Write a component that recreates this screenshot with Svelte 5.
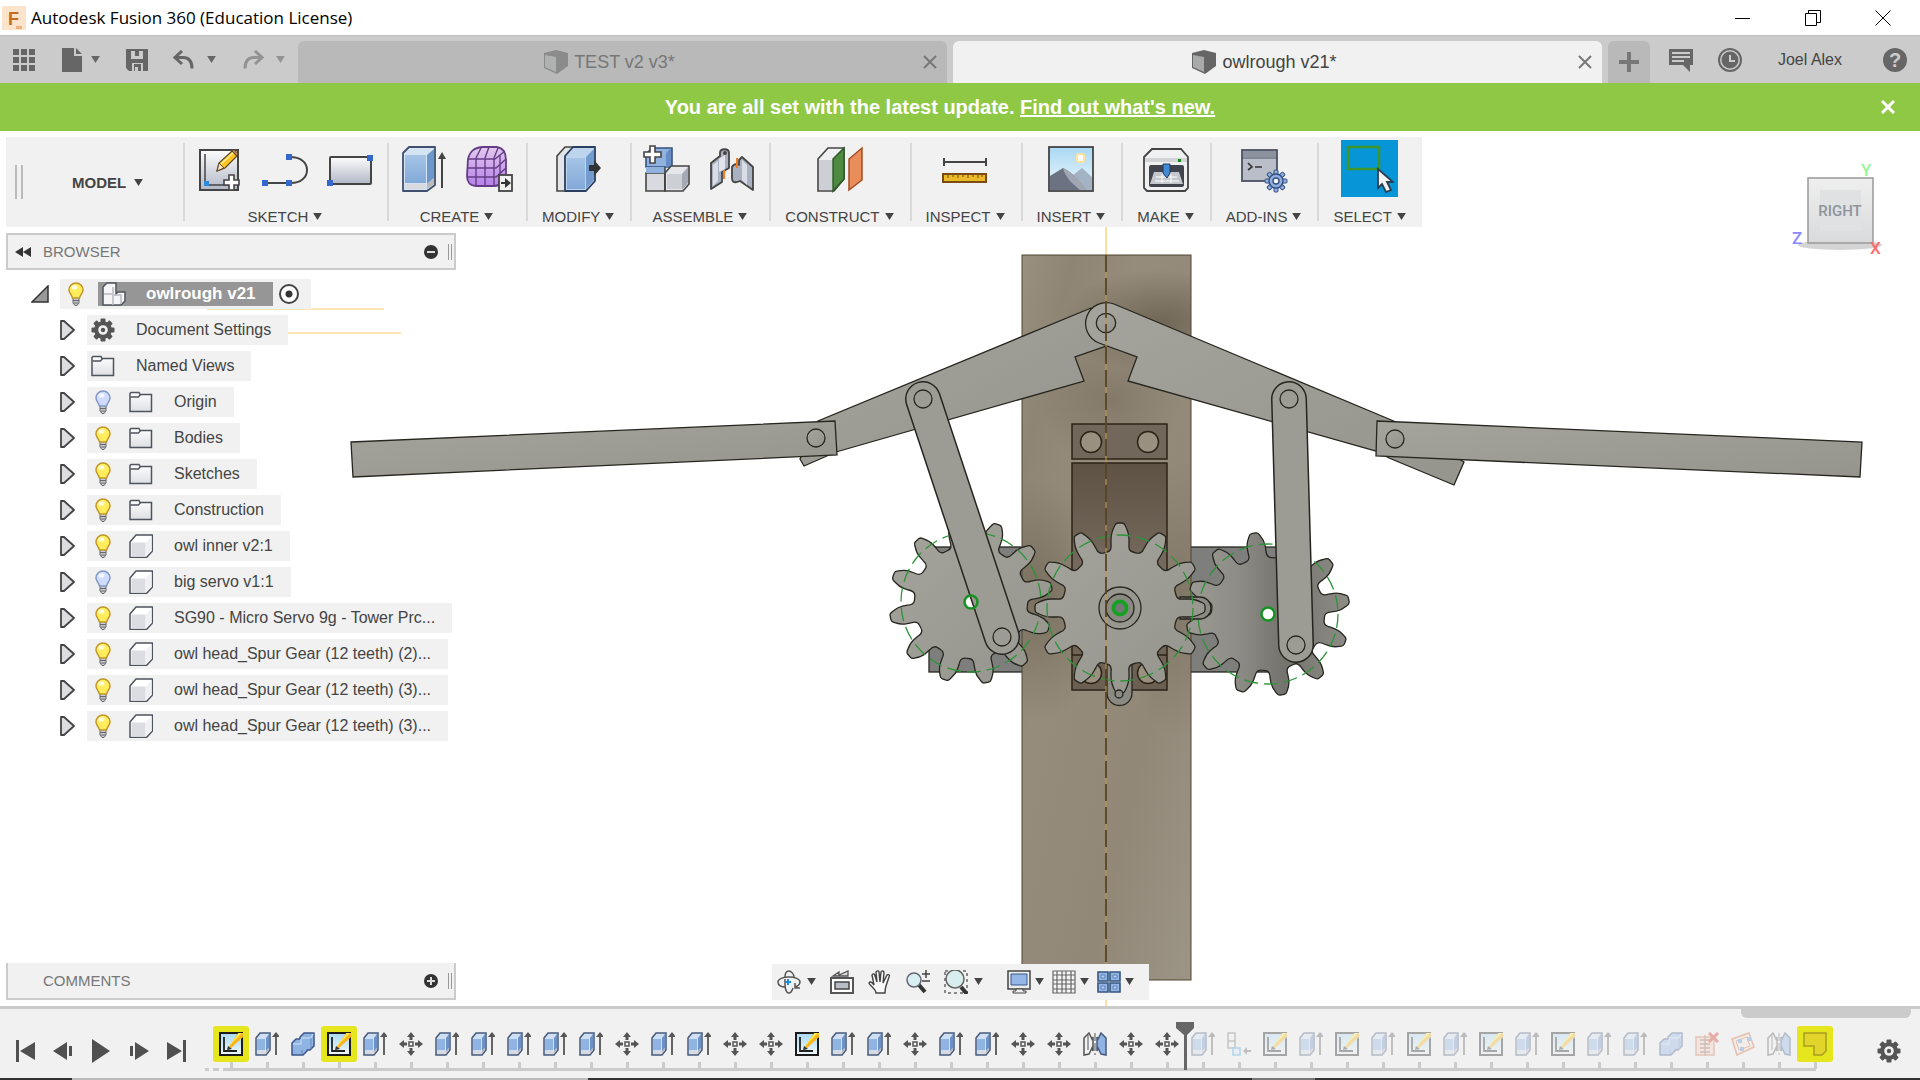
<script lang="ts">
  type Feature = 'sketch' | 'extrude' | 'combine' | 'move' | 'mirror' | 'component' | 'remove' | 'plane' | 'flange';

  const groups = [
    { label: 'SKETCH', icons: ['newSketch', 'line', 'rect'] },
    { label: 'CREATE', icons: ['box', 'form'] },
    { label: 'MODIFY', icons: ['pressPull'] },
    { label: 'ASSEMBLE', icons: ['newComponent', 'joint'] },
    { label: 'CONSTRUCT', icons: ['offsetPlane'] },
    { label: 'INSPECT', icons: ['measure'] },
    { label: 'INSERT', icons: ['image'] },
    { label: 'MAKE', icons: ['printer'] },
    { label: 'ADD-INS', icons: ['scripts'] },
    { label: 'SELECT', icons: ['select'] }
  ];

  let nodes = $state([
    { name: 'Document Settings', icon: 'gear', bulb: false, on: true },
    { name: 'Named Views', icon: 'folder', bulb: false, on: true },
    { name: 'Origin', icon: 'folder', bulb: true, on: false },
    { name: 'Bodies', icon: 'folder', bulb: true, on: true },
    { name: 'Sketches', icon: 'folder', bulb: true, on: true },
    { name: 'Construction', icon: 'folder', bulb: true, on: true },
    { name: 'owl inner v2:1', icon: 'part', bulb: true, on: true },
    { name: 'big servo v1:1', icon: 'part', bulb: true, on: false },
    { name: 'SG90 - Micro Servo 9g - Tower Prc...', icon: 'part', bulb: true, on: true },
    { name: 'owl head_Spur Gear (12 teeth) (2)...', icon: 'part', bulb: true, on: true },
    { name: 'owl head_Spur Gear (12 teeth) (3)...', icon: 'part', bulb: true, on: true },
    { name: 'owl head_Spur Gear (12 teeth) (3)...', icon: 'part', bulb: true, on: true }
  ]);

  const codes: Record<string, Feature> = {
    s: 'sketch', e: 'extrude', c: 'combine', m: 'move', r: 'mirror',
    n: 'component', x: 'remove', p: 'plane', f: 'flange'
  };
  // one letter per timeline feature
  const history = 'secsemeeeeemeemmseemeemmrmmenseseseseseecxprf'.split('').map((c) => codes[c]);
  const flagged = [0, 3, 44];
  const markerAt = 27;

  let bannerOpen = $state(true);
  let rootOn = $state(true);

  function gearPath(cx: number, cy: number, root: number, tip: number, turn: number) {
    let d = '';
    for (let i = 0; i < 12; i++) {
      const a = ((turn + i * 30) * Math.PI) / 180;
      const p = (x: number, r: number) =>
        `${(cx + x * Math.cos(a) + r * Math.sin(a)).toFixed(1)} ${(cy + x * Math.sin(a) - r * Math.cos(a)).toFixed(1)}`;
      d += `${i ? 'L' : 'M'}${p(-13, root - 1)} Q${p(-8, root)} ${p(-9, root + 7)} L${p(-9, root + 12)} `;
      d += `C${p(-9, root + 18)} ${p(-6, tip - 4)} ${p(-5, tip - 2)} Q${p(-4, tip)} ${p(-2, tip)} L${p(2, tip)} `;
      d += `Q${p(4, tip)} ${p(5, tip - 2)} C${p(6, tip - 4)} ${p(9, root + 18)} ${p(9, root + 12)} `;
      d += `L${p(9, root + 7)} Q${p(8, root)} ${p(13, root - 1)} `;
    }
    return d + 'Z';
  }

  const cogTeeth = [0, 45, 90, 135, 180, 225, 270, 315];
</script>

{#snippet caret()}
  <svg class="caret" viewBox="0 0 10 8" width="9" height="7" aria-hidden="true"><path d="M0 0h10L5 8z" fill="currentColor" /></svg>
{/snippet}

{#snippet cog(size: number)}
  <svg viewBox="0 0 24 24" width={size} height={size} aria-hidden="true">
    {#each cogTeeth as a}
      <rect x="9.500" y="0.500" width="5" height="6" rx="1" fill="#555" transform="rotate({a} 12 12)" />
    {/each}
    <circle cx="12" cy="12" r="6.800" fill="none" stroke="#555" stroke-width="4" />
    <circle cx="12" cy="12" r="2.200" fill="#555" />
  </svg>
{/snippet}

{#snippet cube(dim: boolean)}
  <svg viewBox="0 0 24 24" width="24" height="24" opacity={dim ? 0.55 : 1} aria-hidden="true">
    <path d="M0 3 12 0 24 3v13l-11 8L0 18z" fill="#666" />
    <path d="M1 5l11 2v15L1 17z" fill="#a9abab" />
  </svg>
{/snippet}

{#snippet bulb(on: boolean)}
  <svg viewBox="0 0 24 24" width="24" height="24" aria-hidden="true">
    <path d="M9 15h6v6l-2 2.500h-2L9 21z" fill="#c9ccd2" stroke="#666" />
    <path d="M12 1a7 7 0 0 0-7 7c0 3 2.500 4.500 3.500 8h7c1-3.500 3.500-5 3.500-8a7 7 0 0 0-7-7z" fill={on ? '#ffee5a' : '#cfdcff'} stroke={on ? '#c2952a' : '#8398c8'} stroke-width="1.500" />
    <ellipse cx="10.500" cy="5.500" rx="3" ry="2.200" fill="#fff" opacity=".8" />
    <path d="M9 18.500h6M10 21h4" stroke="#666" />
  </svg>
{/snippet}

{#snippet treeIcon(name: string)}
  {#if name === 'gear'}
    {@render cog(24)}
  {:else if name === 'folder'}
    <svg viewBox="0 0 24 24" width="24" height="24" aria-hidden="true">
      <path d="M1 21V3.500l1-1h8l1 2h11.500V21.500H1z" fill="url(#sheet)" stroke="#4e545e" stroke-width="1.500" />
      <path d="M1.500 7h8l2-2.500" fill="none" stroke="#4e545e" stroke-width="1.300" />
    </svg>
  {:else}
    <svg viewBox="0 0 24 24" width="24" height="24" aria-hidden="true">
      <path d="M1 8l6-7h16.500v16l-6 6.500H1z" fill="#fff" stroke="#4e545e" stroke-width="1.500" stroke-linejoin="round" />
      <path d="M2.500 8.500h14V22h-14z" fill="#dcdde2" />
      <path d="M17 8.500l5.500-6V17L17 22z" fill="#f0f0f4" />
    </svg>
  {/if}
{/snippet}

{#snippet tool(name: string)}
  <svg viewBox="0 0 48 48" width="48" height="48" aria-hidden="true">
    {#if name === 'newSketch'}
      <rect x="4" y="5" width="38" height="40" fill="url(#sheet2)" stroke="#444" stroke-width="2" />
      <path d="M9 9v31h24" fill="none" stroke="#444" stroke-width="1.500" />
      <rect x="8" y="36" width="5" height="5" fill="#2a8ae0" />
      <path d="M21 26l2-8L36 6l5 5-12 12z" fill="#ffc41f" stroke="#5b4520" stroke-width="1.200" />
      <path d="M21 26l2-8 5 5z" fill="#f8e3bd" stroke="#5b4520" />
      <path d="M25 19L38 7" stroke="#fff0a0" stroke-width="1.500" />
      <path d="M36 6l2-1.500 4 4L41 11z" fill="#c77e54" stroke="#5b4520" />
      <path d="M33 30h5v5h5v5h-5v5h-5v-5h-5v-5h5z" fill="#fff" stroke="#444" stroke-width="1.600" />
    {:else if name === 'line'}
      <path d="M4 38h26c9 0 16-5 16-13S39 12 29 12" fill="none" stroke="#444" stroke-width="2" />
      <rect x="1" y="35" width="6" height="6" fill="#3568cf" /><rect x="25" y="35" width="6" height="6" fill="#3568cf" /><rect x="25" y="9" width="6" height="6" fill="#3568cf" />
    {:else if name === 'rect'}
      <rect x="4" y="12" width="41" height="27" rx="1" fill="url(#sheet2)" stroke="#444" stroke-width="2" />
      <rect x="1" y="35" width="6" height="6" fill="#3568cf" /><rect x="41" y="10" width="6" height="6" fill="#3568cf" />
    {:else if name === 'box'}
      <path d="M3 8l6-6h26v38l-8 6H3z" fill="#d4e4f2" stroke="#40506e" stroke-width="1.800" stroke-linejoin="round" />
      <path d="M5 10h21v28H5z" fill="url(#blue)" /><path d="M27 10l7-6v29l-7 6z" fill="#6d96ca" />
      <path d="M5 39h21v5H5z" fill="#d8dadf" /><path d="M27 39l7-6v6l-7 5z" fill="#bbb" />
      <path d="M42 43V12" stroke="#444" stroke-width="2" /><path d="M38 14l4-7 4 7z" fill="#444" />
    {:else if name === 'form'}
      <path d="M3 14c2-8 6-11 14-12h15c6 1 9 6 9 13v14c-1 7-5 12-12 12H11c-6 0-9-4-9-10z" fill="url(#violet)" stroke="#653d85" stroke-width="1.800" />
      <path d="M11 13v27M20 13v28M29 13v27M3 14h27l10-8M3 23h28l10-9M3 32h28l10-9M11 13l5-10M20 13l4-11M29 13l4-10M35 10v27" fill="none" stroke="#653d85" stroke-width="1.400" />
      <rect x="34" y="30" width="13" height="16" fill="#f1f1f1" stroke="#444" stroke-width="1.800" />
      <path d="M36 38h6" stroke="#333" stroke-width="2" /><path d="M40 33l6 5-6 5z" fill="#333" />
    {:else if name === 'pressPull'}
      <path d="M3 11l8-9h8v44H3z" fill="#e4e5e8" stroke="#444" stroke-width="1.600" />
      <path d="M11 11l8-9h22v34l-9 10H11z" fill="#bcd5ec" stroke="#2b3d60" stroke-width="1.800" stroke-linejoin="round" />
      <path d="M13 13h18v31H13z" fill="url(#blue)" /><path d="M32 12l8-8v31l-8 9z" fill="#739bcd" />
      <path d="M35 20h5v-5l7 8-7 8v-5h-5z" fill="#333" />
    {:else if name === 'newComponent'}
      <path d="M3 9l6-6h20v19H3z" fill="#8fb2df" stroke="#36507c" stroke-width="1.600" />
      <path d="M3 28h19v18H3z" fill="#d8dadf" stroke="#444" stroke-width="1.600" />
      <path d="M22 28l6-7h18v18l-6 7H22z" fill="#e6e7ea" stroke="#444" stroke-width="1.600" />
      <path d="M24 29h15v15H24z" fill="#ccd0d6" /><path d="M39 29l6-7v16l-6 7z" fill="#a4aab5" /><path d="M23 8l5-5v17l-5 3z" fill="#668dc6" />
      <path d="M3 22h19v6H3z" fill="#8fb2df" /><path d="M22 22v24" stroke="#444" stroke-width="1.600" />
      <path d="M7 1h5v6h6v5h-6v6H7v-6H1V7h6z" fill="#fff" stroke="#444" stroke-width="1.600" />
    {:else if name === 'joint'}
      <path d="M3 18l9-7V8c0-5 9-5 9 0v15l-7 4v10L3 44z" fill="#aab2c1" stroke="#444" stroke-width="1.800" stroke-linejoin="round" />
      <path d="M5 20l5-4v20l-5 5z" fill="#d8dde6" /><path d="M11 14v13l6-3V10z" fill="#e1e5eb" /><circle cx="17" cy="8" r="2" fill="#444" />
      <path d="M16 25v9" stroke="#f07b22" stroke-width="2" />
      <path d="M31 20v-5l3-3 11 10v23L32 36c-7 3-8 0-8-3V22c2-4 7-3 7-2z" fill="#aab2c1" stroke="#444" stroke-width="1.800" stroke-linejoin="round" />
      <path d="M34 15l5 5v20l-5-5z" fill="#d8dde6" /><path d="M29 13v10" stroke="#f07b22" stroke-width="2" />
    {:else if name === 'offsetPlane'}
      <path d="M3 14L13 3h16v31L19 46H3z" fill="#eef0f1" stroke="#444" stroke-width="1.600" /><path d="M4 15h13v30H4z" fill="#ccd0d4" />
      <path d="M18 14L29 3v31L18 46z" fill="#4e8b40" stroke="#2d5b27" stroke-width="1.500" />
      <path d="M34 14L47 3v32L34 45z" fill="#e98e5b" stroke="#a34c20" stroke-width="1.500" />
    {:else if name === 'measure'}
      <path d="M3 17h42M3 13v8M45 13v8" stroke="#444" stroke-width="2" />
      <rect x="2" y="29" width="43" height="8" fill="#ebba28" stroke="#7b4b13" stroke-width="2" />
      <path d="M7 29v4M12 29v3M17 29v4M22 29v3M27 29v4M32 29v3M37 29v4M41 29v3" stroke="#7b4b13" />
    {:else if name === 'image'}
      <rect x="2" y="2" width="44" height="44" fill="url(#sky)" stroke="#444" stroke-width="1.800" />
      <path d="M25 31l10-8 10 9v13H30z" fill="#a4b3c4" /><path d="M3 31l13-8c9 4 17 14 23 22H3z" fill="#6b7281" />
      <path d="M16 23c9 4 18 14 24 22h-7C23 37 18 31 16 23z" fill="#a0a6b2" /><rect x="30" y="9" width="7" height="8" rx="2" fill="#fff" stroke="#ffe39a" stroke-width="2" />
    {:else if name === 'printer'}
      <path d="M2 12l8-8h29l7 8v31l-3 3H5l-3-3z" fill="#eff0f2" stroke="#444" stroke-width="1.800" />
      <path d="M3 13h42v4H3z" fill="#d1d3d7" /><rect x="7" y="20" width="35" height="22" rx="2" fill="#40454d" />
      <path d="M12 27h25l4 12H8z" fill="#c4c7cd" /><path d="M14 32h21M13 36h24M20 29v9M29 29v9" stroke="#fff" />
      <path d="M21 19h7v9l-3 5-4-5z" fill="#438bd5" stroke="#223d60" /><rect x="36" y="14" width="3" height="3" fill="#178717" />
    {:else if name === 'scripts'}
      <rect x="2" y="5" width="35" height="31" fill="#b9bec8" stroke="#4b5363" stroke-width="1.800" /><path d="M3 6h33v6H3z" fill="#8c929e" /><path d="M2 13h35" stroke="#4b5363" />
      <path d="M8 18l4 4-4 3M15 22h7" fill="none" stroke="#333" stroke-width="1.600" />
      {#each cogTeeth as a}<rect x="34" y="25" width="4" height="6" rx="1" fill="#91afe0" stroke="#34507e" transform="rotate({a} 36 36)" />{/each}
      <circle cx="36" cy="36" r="7" fill="#91afe0" stroke="#34507e" stroke-width="1.400" /><circle cx="36" cy="36" r="3" fill="#fff" stroke="#34507e" stroke-width="1.400" />
    {:else}
      <rect x="2" y="2" width="31" height="22" fill="none" stroke="#3f962a" stroke-width="2.500" />
      <path d="M32 24v19l4-4 4 8 5-2-4-8h6z" fill="#f2f2f2" stroke="#2b3e50" stroke-width="1.800" />
    {/if}
  </svg>
{/snippet}

{#snippet featureIcon(kind: Feature)}
  <svg viewBox="0 0 24 24" width="24" height="24" aria-hidden="true">
    {#if kind === 'sketch'}
      <rect x="1" y="1" width="22" height="22" fill="url(#sky)" stroke="#1b1b1b" stroke-width="2" />
      <path d="M5 5v14h13" fill="none" stroke="#222" stroke-width="1.800" />
      <path d="M8 18L19 1h5v4L11 17z" fill="#f8b51e" /><path d="M9 15L20 1h3z" fill="#ffef4b" /><path d="M8 18l1-4 4 3z" fill="#333" />
    {:else if kind === 'extrude'}
      <path d="M1 6l4-5h10v17l-4 5H1z" fill="#cfe0f3" stroke="#47597b" stroke-width="1.500" /><path d="M2 7h8v11H2z" fill="#8fb4e3" /><path d="M11 6l3-4v14l-3 3z" fill="#6d92c8" />
      <path d="M2 19h8v3H2z" fill="#d8dadf" /><path d="M11 19l3-3v2l-3 4z" fill="#bbb" /><path d="M21 23V4" stroke="#555" stroke-width="1.800" /><path d="M17 5l4-5 4 5z" fill="#555" />
    {:else if kind === 'combine'}
      <path d="M9 5l4-4h10v13l-4 4h-3v1l-4 4H1V11l4-4h4z" fill="#8fb4e3" stroke="#3d568a" stroke-width="1.500" stroke-linejoin="round" />
      <path d="M10 6h10l2-4M2 12h8V7" fill="none" stroke="#bcd3f0" stroke-width="1.500" /><path d="M20 6v11M11 18v4" stroke="#6687ba" />
    {:else if kind === 'move'}
      <rect x="10" y="10" width="4" height="4" fill="none" stroke="#555" stroke-width="1.500" />
      <path d="M12 0l4 5h-8zM12 24l4-5h-8zM0 12l5-4v8zM24 12l-5-4v8z" fill="#555" /><path d="M12 4v4M12 16v4M4 12h4M16 12h4" stroke="#555" stroke-width="3" />
    {:else if kind === 'mirror'}
      <path d="M1 6l5-5 3 6 1-2v14l-1-3-3 6-5 1z" fill="#f2f3f5" stroke="#555" stroke-width="1.500" /><path d="M5 3v15" stroke="#555" />
      <path d="M12 1v22" stroke="#555" stroke-dasharray="8 2" /><path d="M23 6l-5-5-3 6-1-2v14l1-3 3 6 5 1z" fill="#8fb4e3" stroke="#47597b" stroke-width="1.500" />
    {:else if kind === 'component'}
      <path d="M1 1h7v8H1zM1 9h7v7H1z" fill="none" stroke="#777" stroke-width="1.500" /><rect x="6" y="16" width="7" height="7" fill="#d3ebf9" stroke="#37a6dd" stroke-width="1.500" /><path d="M18 19h6" stroke="#666" stroke-width="2" /><path d="M16 19l4-4v8z" fill="#666" />
    {:else if kind === 'remove'}
      <path d="M1 5h18v18H1z" fill="#f5cdbb" stroke="#c77b59" stroke-width="1.500" /><path d="M10 3v21M5 8h10M5 12h10M5 16h10M5 20h10" stroke="#91624e" stroke-width="1.300" /><path d="M14 1l9 9M23 1l-9 9" stroke="#d12e1e" stroke-width="3" />
    {:else if kind === 'plane'}
      <path d="M1 7l17-6 5 14-17 8z" fill="#fbe3d4" stroke="#cf6838" stroke-width="1.500" /><path d="M8 18L5 9l11-4 3 9z" fill="none" stroke="#cf6838" /><path d="M7 7h4v4H7zM16 5h4v4h-4zM9 15h4v4H9z" fill="#4f8ddd" />
    {:else}
      <path d="M1 1h22v18l-4 4h-8v-9H1z" fill="#e3d42b" stroke="#a89d22" stroke-width="1.500" />
    {/if}
  </svg>
{/snippet}

<svg class="defs" width="0" height="0" aria-hidden="true">
  <defs>
    <linearGradient id="sheet" x2="0" y2="1"><stop stop-color="#fff" /><stop offset="1" stop-color="#dddfe3" /></linearGradient>
    <linearGradient id="sheet2" x2="0" y2="1"><stop stop-color="#fdfdfd" /><stop offset="1" stop-color="#b1b7c6" /></linearGradient>
    <linearGradient id="blue" x2="0" y2="1"><stop stop-color="#a5c4e6" /><stop offset="1" stop-color="#82a9d8" /></linearGradient>
    <linearGradient id="violet" x2="0" y2="1"><stop stop-color="#e3c9ee" /><stop offset="1" stop-color="#b680ea" /></linearGradient>
    <linearGradient id="sky" x2="0" y2="1"><stop stop-color="#a9d8f3" /><stop offset="1" stop-color="#f0f8fc" /></linearGradient>
  </defs>
</svg>

<div class="app">
  <header class="titlebar">
    <svg class="logo" viewBox="0 0 24 24" width="24" height="24" aria-hidden="true">
      <rect width="24" height="24" fill="#fce3cc" />
      <text x="6" y="19" class="logo-letter">F</text>
      <path d="M14 20h6v3h-6z" fill="#f1b17a" />
    </svg>
    <span class="title">Autodesk Fusion 360 (Education License)</span>
    <button aria-label="Minimize"><svg viewBox="0 0 16 16" width="16" height="16"><path d="M0 8.500h15" stroke="#000" /></svg></button>
    <button aria-label="Restore"><svg viewBox="0 0 16 16" width="16" height="16"><path d="M.5 3.500h11v12H.5zM3.500 3.500v-3h12v12h-4" fill="none" stroke="#000" /></svg></button>
    <button aria-label="Close"><svg viewBox="0 0 16 16" width="16" height="16"><path d="M.5.5l15 15M15.500.5l-15 15" stroke="#000" /></svg></button>
  </header>

  <div class="tabbar">
    <div class="quick">
      <button aria-label="Data panel"><svg viewBox="0 0 22 22" width="22" height="22"><path d="M0 0h6v6H0zM8 0h6v6H8zM16 0h6v6h-6zM0 8h6v6H0zM8 8h6v6H8zM16 8h6v6h-6zM0 16h6v6H0zM8 16h6v6H8zM16 16h6v6h-6z" fill="#666" /></svg></button>
      <button aria-label="File"><svg viewBox="0 0 22 24" width="22" height="24"><path d="M1 0h12v8h8v16H1z" fill="#666" /><path d="M15 0l6 6h-6z" fill="#666" /></svg>{@render caret()}</button>
      <button aria-label="Save"><svg viewBox="0 0 22 22" width="22" height="22"><path d="M0 0h22v22H3l-3-3z" fill="#666" /><path d="M5 2h12v8H5z" fill="#cbcbcb" /><path d="M9 2h4v5H9z" fill="#666" /><path d="M6 14h11v8H6z" fill="#cbcbcb" /><path d="M8 15h7v7h-3v-4H9v4H8z" fill="#666" /></svg></button>
      <button class="undo" aria-label="Undo"><svg viewBox="0 0 22 20" width="22" height="20"><path d="M9 1L2 7.500 9 14M3 7.500h7c6 0 9 4 9 11" fill="none" stroke="#666" stroke-width="3" /></svg>{@render caret()}</button>
      <button class="undo faded" aria-label="Redo"><svg viewBox="0 0 22 20" width="22" height="20"><path d="M13 1l7 6.500-7 6.500M19 7.500h-7c-6 0-9 4-9 11" fill="none" stroke="#666" stroke-width="3" /></svg>{@render caret()}</button>
    </div>
    <div class="tab inactive">
      <button class="tab-name">{@render cube(true)} TEST v2 v3*</button>
      <button class="tab-close" aria-label="Close TEST v2 v3"><svg viewBox="0 0 14 14" width="14" height="14"><path d="M1 1l12 12M13 1L1 13" stroke="#777" stroke-width="2" /></svg></button>
    </div>
    <div class="tab">
      <button class="tab-name">{@render cube(false)} owlrough v21*</button>
      <button class="tab-close" aria-label="Close owlrough v21"><svg viewBox="0 0 14 14" width="14" height="14"><path d="M1 1l12 12M13 1L1 13" stroke="#777" stroke-width="2" /></svg></button>
    </div>
    <button class="new-tab" aria-label="New tab"><svg viewBox="0 0 20 20" width="20" height="20"><path d="M10 0v20M0 10h20" stroke="#777" stroke-width="4" /></svg></button>
    <div class="account">
      <button aria-label="Comments"><svg viewBox="0 0 24 24" width="24" height="24"><path d="M0 1h24v16h-3v7l-7-7H0z" fill="#666" /><path d="M3 5h18M3 9h18M3 13h12" stroke="#cbcbcb" stroke-width="2" /></svg></button>
      <button aria-label="Job status"><svg viewBox="0 0 24 24" width="24" height="24"><circle cx="12" cy="12" r="11" fill="none" stroke="#666" stroke-width="2" /><circle cx="12" cy="12" r="8.500" fill="#666" /><path d="M12 7v6h5" fill="none" stroke="#cbcbcb" stroke-width="2" /></svg></button>
      <button class="user">Joel Alex</button>
      <button aria-label="Help"><svg viewBox="0 0 24 24" width="24" height="24"><circle cx="12" cy="12" r="12" fill="#666" /><text x="12" y="19" text-anchor="middle" class="help-mark">?</text></svg></button>
    </div>
  </div>

  {#if bannerOpen}
    <div class="banner">
      <p>You are all set with the latest update. <a href="#news">Find out what's new.</a></p>
      <button aria-label="Dismiss" onclick={() => (bannerOpen = false)}><svg viewBox="0 0 14 14" width="14" height="14"><path d="M1 1l12 12M13 1L1 13" stroke="#fff" stroke-width="3" /></svg></button>
    </div>
  {/if}

  <main class="workspace">
    <svg class="model" viewBox="0 131 1920 875" aria-label="owlrough v21 model">
      <defs>
        <linearGradient id="board" x2="1" y2="1"><stop stop-color="#9a907f" /><stop offset=".15" stop-color="#8f8575" /><stop offset=".35" stop-color="#968c7c" /><stop offset=".7" stop-color="#918878" /><stop offset="1" stop-color="#9c9484" /></linearGradient>
        <linearGradient id="pocket" x2="0" y2="1"><stop stop-color="#5d5244" /><stop offset=".5" stop-color="#776c5f" /><stop offset="1" stop-color="#6a5f50" /></linearGradient>
        <linearGradient id="metal" x2="1" y2="1"><stop stop-color="#a4a39c" /><stop offset="1" stop-color="#96958d" /></linearGradient>
        <linearGradient id="gearRight" x2="1" y2="0"><stop stop-color="#9b9992" /><stop offset=".3" stop-color="#8e8d87" /><stop offset=".6" stop-color="#74736e" /><stop offset="1" stop-color="#8d8c85" /></linearGradient>
        <radialGradient id="shade"><stop stop-color="#4b4030" stop-opacity=".6" /><stop offset="1" stop-color="#4b4030" stop-opacity="0" /></radialGradient>
        <clipPath id="boardClip"><rect x="1022" y="255" width="169" height="725" /></clipPath>
      </defs>
      <path d="M207 309h177M207 333h194" stroke="#ffe4b8" stroke-width="2" />
      <rect x="929" y="547" width="100" height="125" fill="#7e7e7c" class="edge" />
      <rect x="1185" y="547" width="100" height="125" fill="#7e7e7c" class="edge" />
      <path d="M1106 227v779" stroke="#ffdf9f" stroke-width="2" />
      <rect x="1022" y="255" width="169" height="725" fill="url(#board)" stroke="#51442f" />
      <g clip-path="url(#boardClip)">
        <ellipse cx="1160" cy="322" rx="100" ry="52" fill="url(#shade)" opacity=".8" />
        <ellipse cx="1110" cy="400" rx="70" ry="65" fill="url(#shade)" opacity=".4" />
        <ellipse cx="1040" cy="600" rx="70" ry="120" fill="url(#shade)" opacity=".6" />
        <ellipse cx="1180" cy="600" rx="60" ry="140" fill="url(#shade)" opacity=".4" />
      </g>
      <g stroke="#2d2317" stroke-width="1.500">
        <rect x="1072" y="424" width="95" height="35" fill="#71675a" />
        <rect x="1072" y="463" width="95" height="227" fill="url(#pocket)" />
        <path d="M1072 655h95" />
        <g fill="#999080">
          <circle cx="1091" cy="442" r="10.500" /><circle cx="1148" cy="442" r="10.500" />
          <circle cx="1091" cy="673" r="10.500" /><circle cx="1148" cy="673" r="10.500" />
        </g>
      </g>

      <g class="edge" fill="url(#metal)">
        <path d="M1091 308L818 421l-18 38 4 7 32-14 248-71-9-24 31-11z" />
        <path d="M1114 304l282 118 68 40-10 23-65-27-13-7-248-70 9-24-38-14a20.500 20.500 0 0 1 15-39z" />
        <circle cx="1106" cy="323" r="9.700" />
        <path d="M351 442l484-21 2 34-484 22z" />
        <path d="M1377 421l485 21-2 35-484-21z" />
        <circle cx="816" cy="438" r="9" /><circle cx="1395" cy="439" r="9" />
        <path d={gearPath(1268, 614, 56, 82, -10)} fill="url(#gearRight)" />
        <path d={gearPath(971, 602, 56, 82, 19)} />
      </g>
      <circle cx="1268" cy="614" r="70" class="pitch" />
      <circle cx="971" cy="602" r="70" class="pitch" />
      <circle cx="1268" cy="614" r="6.500" fill="#fff" stroke="#169324" stroke-width="2.500" />

      <circle cx="971" cy="602" r="6" fill="#fff" />
      <g stroke-linecap="round">
        <path d="M923 399l79 238M1289 399l7 246" stroke="#26261f" stroke-width="36" />
        <path d="M923 399l79 238M1289 399l7 246" stroke="#9c9b94" stroke-width="33" />
      </g>
      <circle cx="971" cy="602" r="6.500" fill="none" stroke="#169324" stroke-width="2.500" />
      <g class="edge" fill="none">
        <circle cx="923" cy="399" r="9" /><circle cx="1002" cy="637" r="9" />
        <circle cx="1289" cy="399" r="9" /><circle cx="1296" cy="645" r="9" />
      </g>
      <g class="edge" fill="#8a8982">
        <path d="M1107 650v43a12 12 0 0 0 25 0v-43z" />
        <path d="M1180 597h20a11 11 0 0 1 0 22h-20z" />
        <path d={gearPath(1120, 608, 57, 85, 0)} fill="url(#metal)" />
        <circle cx="1120" cy="608" r="21" fill="#97968f" /><circle cx="1120" cy="608" r="14" />
        <circle cx="1119" cy="694" r="4" />
      </g>
      <circle cx="1120" cy="608" r="73" class="pitch" />
      <circle cx="1120" cy="608" r="6.500" fill="#777" stroke="#16a024" stroke-width="4" />
      <path d="M1106 255v725" stroke="#c69748" stroke-width="1.500" opacity=".7" />
      <path d="M1106 255v725" stroke="#46351d" stroke-width="1.500" stroke-dasharray="17 6" />
    </svg>

    <div class="ribbon">
      <div class="mode">
        <span class="grip"></span>
        <button>MODEL {@render caret()}</button>
      </div>
      {#each groups as group}
        <div class="group">
          <div class="tools">
            {#each group.icons as icon}
              <button class:selected={icon === 'select'} aria-label={icon}>{@render tool(icon)}</button>
            {/each}
          </div>
          <button class="group-label">{group.label} {@render caret()}</button>
        </div>
      {/each}
    </div>

    <div class="viewcube">
      <svg viewBox="0 0 96 104" width="96" height="104" aria-hidden="true">
        <defs><linearGradient id="face" x2="0" y2="1"><stop stop-color="#efefef" /><stop offset="1" stop-color="#d9dadb" /></linearGradient></defs>
        <ellipse cx="50" cy="89" rx="42" ry="5" fill="#aaa" opacity=".5" />
        <rect x="18" y="22" width="65" height="65" fill="url(#face)" stroke="#999" stroke-width="1.500" />
        <rect x="30" y="34" width="41" height="41" fill="#dfe1e3" />
        <text x="50" y="60" text-anchor="middle" class="face-name">RIGHT</text>
        <text x="71" y="20" class="axis" fill="#98f598">Y</text>
        <text x="2" y="88" class="axis" fill="#8888ff">Z</text>
        <text x="80" y="98" class="axis" fill="#ff6b6b">X</text>
      </svg>
    </div>

    <section class="browser">
      <div class="panel-head">
        <button aria-label="Collapse browser"><svg viewBox="0 0 16 10" width="16" height="10"><path d="M8 0v10L0 5zM16 0v10L8 5z" fill="#333" /></svg></button>
        <h2>BROWSER</h2>
        <button aria-label="Hide browser"><svg viewBox="0 0 14 14" width="14" height="14"><circle cx="7" cy="7" r="7" fill="#333" /><path d="M3 7h8" stroke="#ddd" stroke-width="2" /></svg></button>
        <span class="edge-grip"></span>
      </div>
      <div class="row root">
        <button class="twist" aria-label="Collapse owlrough"><svg viewBox="0 0 18 18" width="18" height="18"><path d="M1 17L17 1v16z" fill="#999" stroke="#333" stroke-width="1.500" /></svg></button>
        <div class="node">
          <button aria-label="Toggle visibility" onclick={() => (rootOn = !rootOn)}>{@render bulb(rootOn)}</button>
          <span class="root-name">
            <svg viewBox="0 0 24 24" width="24" height="24" aria-hidden="true"><path d="M1 5l4-4h9v11l2-2h7v9l-4 4H1z" fill="#f5f5f7" stroke="#4e545e" stroke-width="1.500" /><path d="M11 5v18M2 12h8M12 13h7v9" fill="none" stroke="#b7b9c0" stroke-width="1.500" /></svg>
            owlrough v21
          </span>
          <input type="radio" name="active" checked aria-label="Activate owlrough v21" />
        </div>
      </div>
      {#each nodes as node}
        <div class="row">
          <button class="twist" aria-label="Expand {node.name}"><svg viewBox="0 0 15 20" width="15" height="20"><path d="M1 1h3l10 9L4 19H1z" fill="#dedee2" stroke="#444" stroke-width="1.800" stroke-linejoin="round" /></svg></button>
          <div class="node">
            {#if node.bulb}
              <button aria-label="Toggle visibility" onclick={() => (node.on = !node.on)}>{@render bulb(node.on)}</button>
            {/if}
            {@render treeIcon(node.icon)}
            <span class="name">{node.name}</span>
          </div>
        </div>
      {/each}
    </section>

    <div class="dock">
      <div class="panel-head comments">
        <h2>COMMENTS</h2>
        <button aria-label="Show comments"><svg viewBox="0 0 14 14" width="14" height="14"><circle cx="7" cy="7" r="7" fill="#333" /><path d="M3 7h8M7 3v8" stroke="#ddd" stroke-width="2" /></svg></button>
        <span class="edge-grip"></span>
      </div>
      <div class="navbar">
        <div class="nav-set">
          <button aria-label="Orbit">
            <svg viewBox="0 0 24 24" width="24" height="24"><path d="M9 17c-5 0-8-2-8-5s5-5 11-5 11 2 11 5c0 2-2 4-5 5M18 13v5h5" fill="none" stroke="#555" stroke-width="1.500" /><path d="M8 7c0-4 2-6 4-6s5 3 5 6M8 9v5c0 6 2 9 4 9 2 0 3-2 4-5" fill="none" stroke="#555" stroke-width="1.500" /><path d="M11 9v6M8 12h6" stroke="#178ee2" stroke-width="2" /></svg>
            {@render caret()}
          </button>
          <button aria-label="Look at"><svg viewBox="0 0 24 24" width="24" height="24"><path d="M1 8h22v15H1z" fill="#fff" stroke="#555" stroke-width="2" /><path d="M5 12h14v7H5z" fill="#b8bdc6" stroke="#444" stroke-width="1.500" /><path d="M3 6l6-4v3l9-4v5z" fill="#ddd" stroke="#555" stroke-width="1.300" /></svg></button>
          <button aria-label="Pan"><svg viewBox="0 0 24 24" width="24" height="24"><path d="M8 23c0-4-6-7-7-10 1-2 3-1 5 2L4 5c1-2 3-1 3 1l2 6-1-10c1-2 3-1 3 0l1 10 1-10c1-2 3-1 3 1l-1 10 4-8c2-1 3 0 2 2l-3 9c-1 3-1 4-1 7z" fill="#f8f8f8" stroke="#444" stroke-width="1.400" /></svg></button>
          <button aria-label="Zoom"><svg viewBox="0 0 24 24" width="24" height="24"><path d="M13 15l6 7" stroke="#333" stroke-width="4" /><circle cx="8" cy="10" r="7" fill="#d8eef1" stroke="#667" stroke-width="1.500" /><path d="M16 4h8M20 0v8M16 11h8" stroke="#444" stroke-width="1.500" /></svg></button>
          <button aria-label="Zoom window"><svg viewBox="0 0 24 24" width="24" height="24"><path d="M1 1h22v22H1z" fill="none" stroke="#666" stroke-dasharray="3 3" stroke-width="1.500" /><path d="M17 17l6 7" stroke="#333" stroke-width="4" /><circle cx="11" cy="9" r="9" fill="#d8eeee" stroke="#666" stroke-width="1.500" /></svg>{@render caret()}</button>
        </div>
        <div class="nav-set tight">
          <button aria-label="Display settings"><svg viewBox="0 0 24 24" width="24" height="24"><path d="M1 1h22v18H1z" fill="#eee" stroke="#444" stroke-width="1.500" /><path d="M4 4h16v11H4z" fill="#94b7e7" stroke="#36598e" /><path d="M9 19h7v2h3v2H6v-2h3z" fill="#eee" stroke="#444" /></svg>{@render caret()}</button>
          <button aria-label="Grid settings"><svg viewBox="0 0 24 24" width="24" height="24"><path d="M1 1h22v22H1z" fill="#f4f4f4" /><path d="M1 1h22v22H1zM5 1v22M10 1v22M14 1v22M19 1v22M1 5h22M1 10h22M1 14h22M1 19h22" fill="none" stroke="#666" stroke-width="1.200" /></svg>{@render caret()}</button>
          <button aria-label="Viewports"><svg viewBox="0 0 24 24" width="24" height="24"><path d="M1 2h10v9H1zM13 2h10v9H13zM1 13h10v9H1zM13 13h10v9H13z" fill="#94b7e7" stroke="#34557f" stroke-width="1.600" /><path d="M4 5h4v3H4zM16 5h4v3h-4zM4 16h4v3H4zM16 16h4v3h-4z" fill="#b9d1f0" stroke="#5d81b6" /></svg>{@render caret()}</button>
        </div>
      </div>
    </div>
  </main>

  <footer class="timeline">
    <span class="thumb"></span>
    <div class="playback">
      <button aria-label="Go to start"><svg viewBox="0 0 20 24" width="20" height="24"><path d="M1 1h3v22H1zM20 3v18L5 12z" fill="#505050" /></svg></button>
      <button aria-label="Step back"><svg viewBox="0 0 20 24" width="20" height="24"><path d="M14 3v18L0 12zM16 7h3v10h-3z" fill="#505050" /></svg></button>
      <button aria-label="Play"><svg viewBox="0 0 20 24" width="20" height="24"><path d="M1 0l18 12L1 24z" fill="#505050" /></svg></button>
      <button aria-label="Step forward"><svg viewBox="0 0 20 24" width="20" height="24"><path d="M6 3v18l14-9zM1 7h3v10H1z" fill="#505050" /></svg></button>
      <button aria-label="Go to end"><svg viewBox="0 0 20 24" width="20" height="24"><path d="M16 1h3v22h-3zM0 3v18l15-9z" fill="#505050" /></svg></button>
    </div>
    <div class="track">
      {#each history as kind, i}
        <button class="feature" class:flagged={flagged.includes(i)} class:pending={i >= markerAt && !flagged.includes(i)} aria-label={kind}>
          <span class="chip">{@render featureIcon(kind)}</span>
          {#if i === markerAt}
            <svg class="marker" viewBox="0 0 18 48" width="18" height="48" aria-hidden="true"><path d="M0 0h18v6l-7 7v35H8V13L0 6z" fill="#666" /></svg>
          {/if}
        </button>
      {/each}
    </div>
    <button class="settings" aria-label="Timeline settings">{@render cog(24)}</button>
  </footer>
  <div class="taskbar"></div>
</div>

<style>
  :global(body) {
    background: #fff;
  }

  .app {
    min-height: 100vh;
    display: flex;
    flex-direction: column;
    font-family: "Liberation Sans", Arial, sans-serif;
    font-size: 16px;
    color: #444;
  }

  .app * {
    box-sizing: border-box;
  }

  .defs {
    position: absolute;
  }

  button {
    display: flex;
    align-items: center;
    justify-content: center;
    padding: 0;
    border: 0;
    background: none;
    font: inherit;
    color: inherit;
    white-space: nowrap;
  }

  svg {
    display: block;
    flex: none;
  }

  h2, p {
    margin: 0;
  }

  .titlebar {
    display: flex;
    align-items: center;
    height: 35px;
    padding: 0 2px;
    font-family: "Open Sans", "Noto Sans", sans-serif;
    font-size: 17px;
    color: #000;
  }

  .title {
    flex: 1;
    margin-left: 5px;
  }

  .titlebar button {
    width: 70px;
    height: 32px;
  }

  .logo-letter {
    font: bold 18px "Liberation Sans", sans-serif;
    fill: #c96a1d;
  }

  .tabbar {
    display: flex;
    align-items: flex-end;
    height: 48px;
    background: #cbcbcb;
    border-top: 1px solid #bdbdbd;
  }

  .quick {
    display: flex;
    align-items: center;
    align-self: stretch;
    width: 298px;
    padding: 0 13px;
    justify-content: space-between;
    color: #666;
  }

  .quick button {
    gap: 8px;
  }

  .quick .undo {
    gap: 12px;
  }

  .faded {
    opacity: 0.55;
  }

  .tab {
    flex: 1;
    display: flex;
    height: 42px;
    margin-right: 6px;
    border-radius: 6px 6px 0 0;
    background: #f1f1f1;
    font-size: 18px;
  }

  .inactive {
    background: #b9b9b9;
    color: #777;
  }

  .tab-name {
    flex: 1;
    gap: 6px;
    padding-left: 8px;
  }

  .tab-close {
    width: 34px;
  }

  .new-tab {
    width: 42px;
    height: 42px;
    border-radius: 6px 6px 0 0;
    background: #b9b9b9;
  }

  .account {
    display: flex;
    align-items: center;
    align-self: stretch;
    gap: 25px;
    padding: 0 13px 0 19px;
  }

  .user {
    margin: 0 16px 0 11px;
  }

  .help-mark {
    font: bold 20px "Liberation Sans", sans-serif;
    fill: #cbcbcb;
  }

  .banner {
    display: flex;
    align-items: center;
    height: 48px;
    padding: 0 12px;
    background: #8fc845;
    color: #fff;
    font-size: 20px;
    font-weight: bold;
  }

  .banner p {
    flex: 1;
    text-align: center;
  }

  .banner a {
    color: #fff;
  }

  .banner button {
    width: 40px;
    height: 40px;
  }

  .workspace {
    position: relative;
    flex: 1;
    display: flex;
    flex-direction: column;
    align-items: flex-start;
    padding: 6px;
  }

  .model {
    position: absolute;
    inset: 0;
    width: 100%;
    height: 100%;
  }

  .edge {
    stroke: #26261f;
    stroke-width: 1.3;
  }

  .pitch {
    fill: none;
    stroke: #2c9438;
    stroke-width: 1.3;
    stroke-dasharray: 14 6;
  }

  .ribbon {
    position: relative;
    display: flex;
    height: 90px;
    background: #f1f1f1;
    font-size: 15px;
  }

  .mode {
    display: flex;
    align-items: center;
    width: 177px;
    padding-left: 9px;
    font-weight: bold;
  }

  .mode button {
    margin-left: 49px;
    gap: 8px;
  }

  .grip {
    width: 8px;
    height: 34px;
    border: solid #bbb;
    border-width: 0 2px;
  }

  .group {
    position: relative;
    padding: 3px 13px 0;
  }

  .group::before {
    content: "";
    position: absolute;
    left: 0;
    top: 6px;
    bottom: 6px;
    width: 2px;
    background: #d9d9d9;
  }

  .tools {
    display: flex;
    justify-content: center;
    gap: 17px;
    height: 57px;
  }

  .selected {
    width: 57px;
    background: #0696d7;
  }

  .group-label {
    width: 100%;
    height: 22px;
    margin-top: 8px;
    padding: 0 3px;
    gap: 5px;
  }

  .viewcube {
    position: absolute;
    top: 25px;
    right: 34px;
  }

  .face-name {
    font: 500 15px Roboto, sans-serif;
    fill: #8d949b;
  }

  .axis {
    font: 500 17px Roboto, sans-serif;
  }

  .browser {
    position: relative;
    margin-top: 6px;
  }

  .panel-head {
    display: flex;
    align-items: center;
    width: 450px;
    height: 37px;
    padding: 0 2px 0 7px;
    border: 2px solid #cbcbcb;
    background: #f1f1f1;
  }

  .panel-head h2 {
    flex: 1;
    margin-left: 12px;
    font-size: 15px;
    font-weight: normal;
    color: #777;
  }

  .edge-grip {
    width: 4px;
    height: 16px;
    margin-left: 10px;
    border: solid #999;
    border-width: 0 1px;
  }

  .row {
    display: flex;
    align-items: center;
    height: 30px;
    margin: 6px 0 0 54px;
  }

  .row.root {
    margin: 9px 0 0 25px;
  }

  .twist {
    width: 15px;
    margin-right: 12px;
  }

  .root .twist {
    width: 18px;
    margin-right: 11px;
  }

  .node {
    display: flex;
    align-items: center;
    height: 30px;
    padding: 0 17px 0 4px;
    background: #f1f1f1;
  }

  .node button {
    margin-right: 14px;
  }

  .root .node {
    padding-right: 12px;
  }

  .name {
    margin-left: 21px;
    white-space: nowrap;
  }

  .root-name {
    display: flex;
    align-items: center;
    gap: 20px;
    height: 24px;
    padding: 0 17px 0 4px;
    margin-right: 6px;
    background: #969696;
    color: #fff;
    font-size: 17px;
    font-weight: bold;
  }

  .root .node button {
    margin-right: 10px;
  }

  input[type="radio"] {
    appearance: none;
    width: 20px;
    height: 20px;
    margin: 0;
    border: 2px solid #444;
    border-radius: 50%;
    background: radial-gradient(circle, #333 3px, #fff 4px);
  }

  .dock {
    position: relative;
    display: grid;
    grid-template-columns: 1fr auto 1fr;
    align-items: center;
    width: 100%;
    margin-top: auto;
  }

  .comments {
    border-top: 0;
  }

  .comments h2 {
    margin-left: 28px;
  }

  .navbar {
    display: flex;
    gap: 24px;
    height: 36px;
    padding: 0 15px 0 5px;
    background: #f1f1f1;
  }

  .nav-set {
    display: flex;
    gap: 14px;
  }

  .tight {
    gap: 8px;
  }

  .nav-set button {
    gap: 6px;
  }

  .nav-set.tight button {
    gap: 4px;
  }

  .timeline {
    position: relative;
    display: flex;
    height: 72px;
    padding: 0 19px 0 15px;
    border-top: 3px solid #cbcbcb;
    background: #f1f1f1;
  }

  .thumb {
    position: absolute;
    right: 9px;
    top: 0;
    width: 170px;
    height: 9px;
    border-radius: 0 0 6px 6px;
    background: #cbcbcb;
  }

  .playback {
    display: flex;
    align-items: center;
    gap: 18px;
    padding: 14px 26px 0 0;
  }

  .track {
    position: relative;
    display: flex;
    margin-top: 17px;
  }

  .track::before {
    content: "";
    position: absolute;
    left: -8px;
    right: 17px;
    top: 42px;
    height: 3px;
    background: linear-gradient(90deg, #cbcbcb 4px, #f1f1f1 4px 8px, #cbcbcb 8px 14px, #f1f1f1 14px 18px, #cbcbcb 18px);
  }

  .feature {
    position: relative;
    flex-direction: column;
    justify-content: flex-start;
    width: 36px;
  }

  .feature::after {
    content: "";
    width: 3px;
    height: 7px;
    background: #cbcbcb;
  }

  .chip {
    display: flex;
    align-items: center;
    justify-content: center;
    width: 36px;
    height: 36px;
    border-radius: 3px;
  }

  .flagged .chip {
    background: #e6e61f;
  }

  .pending .chip {
    opacity: 0.35;
  }

  .marker {
    position: absolute;
    left: -9px;
    top: -4px;
  }

  .settings {
    margin: 14px 0 0 auto;
  }

  .taskbar {
    height: 2px;
    background: linear-gradient(90deg, #333 3.75%, #bbb 3.75% 30.6%, #333 30.6% 65.2%, #777 65.2% 68.5%, #333 68.5%);
  }
</style>
